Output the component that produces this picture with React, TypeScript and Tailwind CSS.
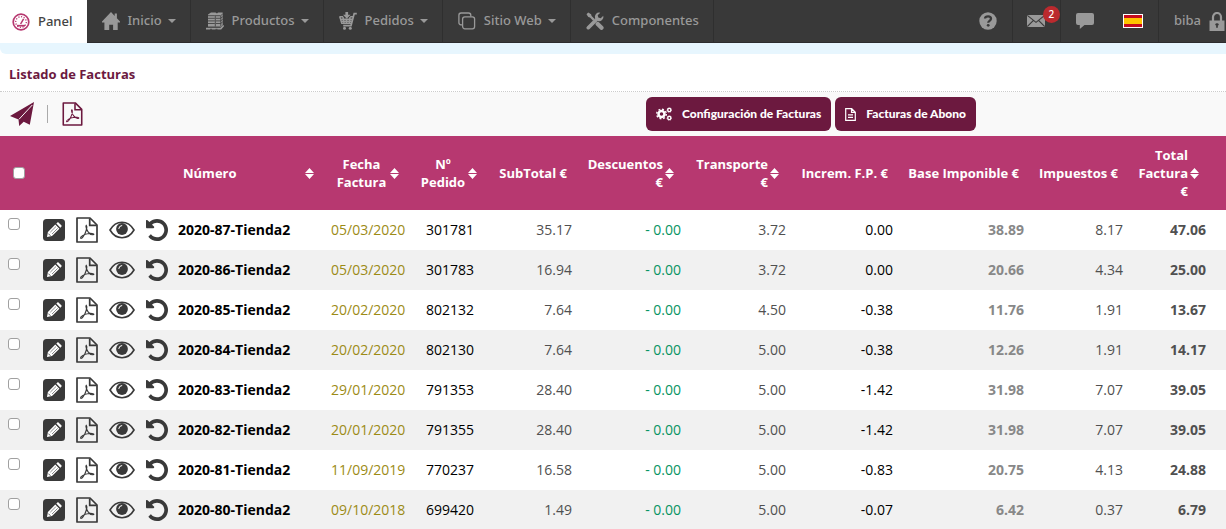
import type { ReactNode } from "react";
import clsx from "clsx";

interface Invoice {
  number: string;
  date: string;
  order: string;
  subtotal: string;
  discount: string;
  shipping: string;
  increment: string;
  base: string;
  taxes: string;
  total: string;
}

const invoices: Invoice[] = [
  { number: "2020-87-Tienda2", date: "05/03/2020", order: "301781", subtotal: "35.17", discount: "- 0.00", shipping: "3.72", increment: "0.00", base: "38.89", taxes: "8.17", total: "47.06" },
  { number: "2020-86-Tienda2", date: "05/03/2020", order: "301783", subtotal: "16.94", discount: "- 0.00", shipping: "3.72", increment: "0.00", base: "20.66", taxes: "4.34", total: "25.00" },
  { number: "2020-85-Tienda2", date: "20/02/2020", order: "802132", subtotal: "7.64", discount: "- 0.00", shipping: "4.50", increment: "-0.38", base: "11.76", taxes: "1.91", total: "13.67" },
  { number: "2020-84-Tienda2", date: "20/02/2020", order: "802130", subtotal: "7.64", discount: "- 0.00", shipping: "5.00", increment: "-0.38", base: "12.26", taxes: "1.91", total: "14.17" },
  { number: "2020-83-Tienda2", date: "29/01/2020", order: "791353", subtotal: "28.40", discount: "- 0.00", shipping: "5.00", increment: "-1.42", base: "31.98", taxes: "7.07", total: "39.05" },
  { number: "2020-82-Tienda2", date: "20/01/2020", order: "791355", subtotal: "28.40", discount: "- 0.00", shipping: "5.00", increment: "-1.42", base: "31.98", taxes: "7.07", total: "39.05" },
  { number: "2020-81-Tienda2", date: "11/09/2019", order: "770237", subtotal: "16.58", discount: "- 0.00", shipping: "5.00", increment: "-0.83", base: "20.75", taxes: "4.13", total: "24.88" },
  { number: "2020-80-Tienda2", date: "09/10/2018", order: "699420", subtotal: "1.49", discount: "- 0.00", shipping: "5.00", increment: "-0.07", base: "6.42", taxes: "0.37", total: "6.79" },
];

/* ICONS */

const GaugeIcon = () => (
  <svg className="h-[18px] w-[18px] shrink-0 text-[#b73870]" viewBox="0 0 18 18" fill="none" stroke="currentColor">
    <circle cx="9" cy="9" r="7.8" strokeWidth="1.7" />
    <circle cx="9" cy="9" r="5.3" strokeWidth="1.3" strokeDasharray="1.2 1.5" />
    <path d="M5 12.7h8" strokeWidth="1.7" />
    <path d="M8.6 11 11.6 5.8" strokeWidth="1.5" />
  </svg>
);

const HomeIcon = () => (
  <svg className="h-[18px] w-[18px] shrink-0" viewBox="0 0 18 18" fill="currentColor">
    <path d="M9 0 12.7 3.9V1.5h2.2v4.7L18 9.6v.9h-2.3V18h-4.6v-5.3H7.2V18H2.4v-7.5H0v-.9z" />
  </svg>
);

const BoxesIcon = () => (
  <svg className="h-[18px] w-[18px] shrink-0" viewBox="0 0 18 18" fill="none">
    <path d="M2 2.600 5 .500h4.500L11 1.500 12 .500h4.700v12.700l-1.900 1.600H2z" fill="currentColor" />
    <path d="M0 15.600h14.600l2.600-2.500 1 .800-3 3.600H0z" fill="currentColor" />
    <path d="M2 3.700h6.800M2 6.300h6.800M2 8.900h6.800M2 11.500h6.800M9.900 3.700h4.700l2-1.500M9.900 6.300h4.700l2-1.500M9.900 8.900h4.700l2-1.500M9.900 11.500h4.700l2-1.500M9.300 3v11.500M14.800 4v10" stroke="#393939" strokeWidth=".800" />
    <path d="M0 15.200h14.600M4 17.300h2M9.500 17.300h2" stroke="#393939" strokeWidth=".800" />
  </svg>
);

const CartIcon = () => (
  <svg className="h-[18px] w-[18px] shrink-0" viewBox="0 0 18 18" fill="none" stroke="currentColor">
    <path d="M17.800 1.600h-2.600L12 13.700H4.200" strokeWidth="1.700" />
    <path d="M.7 4.800h3.500M11.200 4.800h3M.6 4.200l2.200 7h9.700M1.800 7.300h11.600M2.200 9.300h10.600M4 5l1 6M7.500 7v4M11 5l-.7 6" strokeWidth="1.500" />
    <path d="M6.400 0h2.700v2.800h2.500L7.800 6.700 4 2.800h2.400z" fill="currentColor" stroke="none" />
    <circle cx="5.500" cy="16.300" r="1.500" fill="currentColor" stroke="none" />
    <circle cx="11.300" cy="16.300" r="1.500" fill="currentColor" stroke="none" />
  </svg>
);

const CopyIcon = () => (
  <svg className="h-[18px] w-[18px] shrink-0" viewBox="0 0 18 18" fill="none" stroke="currentColor" strokeWidth="1.3">
    <rect x="4.600" y="4.800" width="12" height="12" rx="2.200" />
    <path d="M4.400 12.800H3A2.200 2.200 0 0 1 .9 10.600V3.200A2.200 2.200 0 0 1 3.100 1h7.500a2.200 2.200 0 0 1 2.200 2.200v1.400" />
  </svg>
);

const ToolsIcon = () => (
  <svg className="h-[18px] w-[18px] shrink-0" viewBox="0 0 18 18" fill="none" stroke="currentColor">
    <path d="m2.300 15.700 7.500-7.500" strokeWidth="3.600" strokeLinecap="round" />
    <path d="M14.300.7a4.400 4.400 0 0 0-5.200 5.800l2.500 2.500a4.400 4.400 0 0 0 5.700-5.300l-2.600 2.500-2.400-.6-.6-2.400z" fill="currentColor" stroke="none" />
    <path d="m.500 2.300 1.700-1.700 2.900 1.700.5 1.700 3.100 3.100-1.600 1.600L4 5.600l-1.700-.5z" fill="currentColor" stroke="none" />
    <path d="m11.700 12 3.800 3.800" strokeWidth="4.200" strokeLinecap="round" />
  </svg>
);

const HelpIcon = () => (
  <svg className="h-[18px] w-[18px]" viewBox="0 0 18 18" fill="none">
    <circle cx="9" cy="9" r="8.700" fill="currentColor" />
    <path d="M6 6.500C6.300 3.700 12 3.500 12 6.700c0 2-2.800 2.200-2.800 4" stroke="#393939" strokeWidth="2.300" />
    <circle cx="9.200" cy="13.300" r="1.400" fill="#393939" />
  </svg>
);

const MailIcon = () => (
  <svg className="h-3 w-[18px]" viewBox="0 0 18 12" fill="none">
    <path d="M0 0h18v12H0z" fill="currentColor" />
    <path d="m.3.400 8.700 7 8.700-7M.3 11.600l5.900-6M17.700 11.600l-5.900-6" stroke="#393939" strokeWidth="1.100" />
  </svg>
);

const ChatIcon = () => (
  <svg className="h-[18px] w-[18px]" viewBox="0 0 18 18" fill="currentColor">
    <path d="M2 1h14a2 2 0 0 1 2 2v8a2 2 0 0 1-2 2H8.500L3.800 17v-4H2a2 2 0 0 1-2-2V3a2 2 0 0 1 2-2z" />
  </svg>
);

const LockIcon = () => (
  <svg className="h-[19px] w-4 shrink-0" viewBox="0 0 16 19" fill="none">
    <path d="M4 9V5a4 4 0 0 1 8 0v4" stroke="currentColor" strokeWidth="2.200" />
    <path d="M.5 8.500h15V19H.5z" fill="currentColor" />
    <path d="M8 11.300v4.500M6.300 12.500h3.400" stroke="#393939" strokeWidth="1.700" />
  </svg>
);

const SpainFlag = () => (
  <svg className="h-3.5 w-5" viewBox="0 0 20 14">
    <path d="M0 0h20v14H0z" fill="#fff" />
    <path d="M1 1h18v12H1z" fill="#c60b1e" />
    <path d="M1 4h18v6H1z" fill="#ffc400" />
  </svg>
);

const Caret = () => (
  <svg className="-ml-0.5 h-1 w-2" viewBox="0 0 8 4" fill="currentColor">
    <path d="M0 0h8L4 4z" />
  </svg>
);

const PlaneIcon = () => (
  <svg className="h-6 w-6" viewBox="0 0 24 24">
    <path d="M24 0 19.800 22.800l-6.100-3L9.200 24l-.7-6.600L0 14z" fill="currentColor" />
    <path d="M22.300 3 9 17.300" stroke="#f9f9f9" strokeWidth="1" />
  </svg>
);

const PdfIcon = ({ className }: { className?: string }) => (
  <svg className={className} viewBox="0 0 22 26" fill="none" stroke="currentColor">
    <path d="M1 1h13l7 7v17H1z" strokeWidth="1.700" strokeLinejoin="round" />
    <path d="M13.700 1.500V8.300h7" strokeWidth="1.700" />
    <path d="M10.300 8.300c-1.300.8.7 5 1.800 6.500 1.500 2 3.900 3.400 5.600 2.800.9-1.200-3.300-1.500-6.200-.8-3 .5-7 2.700-7 4.200 1 1.400 3.300-2 4.300-4 1.300-2.700 2.600-7.500 1.500-8.700z" strokeWidth="1.100" />
  </svg>
);

const PencilIcon = () => (
  <svg className="h-[22px] w-[22px]" viewBox="0 0 22 22">
    <rect width="22" height="22" rx="3.500" fill="currentColor" />
    <path d="m4 18 .9-5 7.400-7.400 4.100 4.100L9 17.100zM13.300 4.600l.9-.9c.5-.5 1-.5 1.500 0l2.600 2.600c.5.500.5 1 0 1.500l-.9.9z" fill="#fff" />
    <path d="m7.300 13.200 5.700-5.700M9 15l5.700-5.700" stroke="#393939" strokeWidth=".600" />
    <path d="m5.300 14.600 2.200 2.200" stroke="#393939" strokeWidth=".800" />
  </svg>
);

const EyeIcon = () => (
  <svg className="h-[18px] w-[26px]" viewBox="0 0 26 18" fill="none">
    <path d="M1 9C4 3.800 8.300 1.200 13 1.200S22 3.800 25 9c-3 5.200-7.300 7.700-12 7.700S4 14.200 1 9z" stroke="currentColor" strokeWidth="1.600" />
    <circle cx="13" cy="8" r="5.900" fill="currentColor" />
    <path d="M9.800 7.500a3.300 3.300 0 0 1 3-3" stroke="#fff" strokeWidth="1" strokeLinecap="round" />
  </svg>
);

const UndoIcon = () => (
  <svg className="h-[22px] w-[22px]" viewBox="128 128 1536 1536" fill="currentColor">
    <path d="M1664 896q0 156-61 298t-164 245-245 164-298 61q-172 0-327-72.500t-264-204.500q-7-10-6.500-22.500t8.500-20.500l137-138q10-9 25-9 16 2 23 12 73 95 179 147t225 52q104 0 198.500-40.500t163.500-109.500 109.500-163.500 40.500-198.500-40.500-198.500-109.500-163.500-163.500-109.500-198.500-40.500q-98 0-188 35.500t-160 101.500l137 138q31 30 14 69-17 40-59 40h-448q-26 0-45-19t-19-45v-448q0-42 40-59 39-17 69 14l130 129q107-101 244.500-156.500t284.500-55.500q156 0 298 61t245 164 164 245 61 298z" />
  </svg>
);

const GearsIcon = () => (
  <svg className="h-3.5 w-4" viewBox="0 0 16 14" fill="none" stroke="currentColor">
    <circle cx="5.500" cy="7" r="3" strokeWidth="2.500" />
    <circle cx="5.500" cy="7" r="4.800" strokeWidth="1.400" strokeDasharray="1.900 1.870" />
    <circle cx="13.300" cy="3" r="1.600" strokeWidth="1.400" />
    <circle cx="13.300" cy="3" r="2.400" strokeWidth=".600" strokeDasharray="1 .880" />
    <circle cx="13.300" cy="11" r="1.600" strokeWidth="1.400" />
    <circle cx="13.300" cy="11" r="2.400" strokeWidth=".600" strokeDasharray="1 .880" />
  </svg>
);

const FileIcon = () => (
  <svg className="h-[13px] w-[11px]" viewBox="0 0 11 13" fill="none" stroke="currentColor" strokeWidth="1.200">
    <path d="M.7.700h6l3.600 3.500v8.100H.7zM6.500.700v3.700h3.800M3 6.800h5M3 9.300h5" />
  </svg>
);

const SortIcon = () => (
  <svg className="h-[11px] w-[9px] shrink-0" viewBox="0 0 9 11" fill="#fff">
    <path d="M4.500 0 9 5H0zM0 6h9l-4.500 5z" />
  </svg>
);

/* NAVIGATION */

interface NavItemProps {
  icon: ReactNode;
  label: string;
  active?: boolean;
  menu?: boolean;
}

const NavItem = ({ icon, label, active, menu }: NavItemProps) => (
  <a
    href="#"
    className={clsx(
      "flex items-center gap-2 pr-3.5",
      active
        ? "bg-white pl-3 text-[#444444]"
        : "border-r border-b border-r-[#2f2f2f] border-b-[#2d2c2e] pl-[15px]"
    )}
  >
    {icon}
    <span>{label}</span>
    {menu && <Caret />}
  </a>
);

const TopBar = () => (
  <nav className="flex h-[43px] bg-[#393939] font-['Noto_Sans','Open_Sans',sans-serif] text-[13px] font-medium text-[#999999]">
    <NavItem icon={<GaugeIcon />} label="Panel" active />
    <NavItem icon={<HomeIcon />} label="Inicio" menu />
    <NavItem icon={<BoxesIcon />} label="Productos" menu />
    <NavItem icon={<CartIcon />} label="Pedidos" menu />
    <NavItem icon={<CopyIcon />} label="Sitio Web" menu />
    <NavItem icon={<ToolsIcon />} label="Componentes" />

    <div className="flex flex-1 justify-end border-b border-[#2d2c2e]">
      <button type="button" aria-label="Ayuda" className="flex w-[49px] items-center justify-center border-r border-[#2f2f2f]">
        <HelpIcon />
      </button>
      <button type="button" aria-label="Mensajes" className="relative flex w-12 items-center justify-center border-r border-[#2f2f2f]">
        <MailIcon />
        <span className="absolute top-1.5 right-0 h-[17px] w-[17px] rounded-full bg-[#bb2a2e] text-center text-[10px] leading-4 text-white">
          2
        </span>
      </button>
      <button type="button" aria-label="Chat" className="flex w-12 items-center justify-center">
        <ChatIcon />
      </button>
      <button type="button" aria-label="Español" className="flex w-[50px] items-center justify-center border-r border-[#2f2f2f]">
        <SpainFlag />
      </button>
      <a href="#" className="flex items-center gap-2 pr-px pl-[15px]">
        <span>biba</span>
        <LockIcon />
      </a>
    </div>
  </nav>
);

/* TABLE */

const HeadCell = ({ label, className, sortable }: { label: string; className?: string; sortable?: boolean }) => (
  <th scope="col" className="p-0">
    {sortable ? (
      <button type="button" className={clsx("flex w-full items-center font-bold", className)}>
        <span>{label}</span>
        <SortIcon />
      </button>
    ) : (
      <div className={clsx("whitespace-nowrap", className)}>{label}</div>
    )}
  </th>
);

const Check = ({ label }: { label: string }) => (
  <input
    type="checkbox"
    aria-label={label}
    className="block h-3 w-3 appearance-none rounded-[3px] border border-[#a0a0a0] bg-white checked:bg-[#b73870]"
  />
);

const InvoiceRow = ({ invoice }: { invoice: Invoice }) => (
  <tr className="h-10 odd:bg-white even:bg-[#f1f1f1]">
    <td className="pt-2 pl-2 align-top">
      <Check label={`Seleccionar ${invoice.number}`} />
    </td>
    <td className="pl-[5px]">
      <div className="flex items-center gap-[11px] text-[#393939]">
        <button type="button" aria-label="Editar"><PencilIcon /></button>
        <button type="button" aria-label="PDF"><PdfIcon className="h-[26px] w-[22px]" /></button>
        <button type="button" aria-label="Ver"><EyeIcon /></button>
        <button type="button" aria-label="Deshacer"><UndoIcon /></button>
      </div>
    </td>
    <td className="pl-2.5 font-bold text-black">{invoice.number}</td>
    <td className="pl-2.5 text-[#9c8b16]">{invoice.date}</td>
    <td className="pl-2.5 text-black">{invoice.order}</td>
    <td className="pr-2.5 text-right">{invoice.subtotal}</td>
    <td className="pr-2.5 text-right text-[#079463]">{invoice.discount}</td>
    <td className="pr-2.5 text-right">{invoice.shipping}</td>
    <td className="pr-2.5 text-right text-black">{invoice.increment}</td>
    <td className="pr-2.5 text-right font-bold text-[#888888]">{invoice.base}</td>
    <td className="pr-2.5 text-right">{invoice.taxes}</td>
    <td className="pr-5 text-right font-bold">{invoice.total}</td>
  </tr>
);

const InvoiceTable = () => (
  <table className="w-full table-fixed border-collapse text-sm text-[#505050]">
    <colgroup>
      <col className="w-[38px]" />
      <col className="w-[130px]" />
      <col />
      <col className="w-[95px]" />
      <col className="w-[75px]" />
      <col className="w-[91px]" />
      <col className="w-[109px]" />
      <col className="w-[105px]" />
      <col className="w-[107px]" />
      <col className="w-[131px]" />
      <col className="w-[99px]" />
      <col className="w-[93px]" />
    </colgroup>
    <thead className="bg-[#b73870] text-[13px] leading-[18px] text-white">
      <tr className="h-[74px]">
        <th scope="col" className="pl-[13px]">
          <Check label="Seleccionar todas" />
        </th>
        <th scope="col" aria-label="Acciones" />
        <HeadCell label="Número" sortable className="justify-between pr-[7px] pl-[15px]" />
        <HeadCell label="Fecha Factura" sortable className="gap-[3px] pr-[17px] pl-[15px] text-center" />
        <HeadCell label="Nº Pedido" sortable className="gap-0.5 pr-3.5 pl-1 text-center" />
        <HeadCell label="SubTotal €" className="pr-[15px] text-right" />
        <HeadCell label="Descuentos €" sortable className="justify-end gap-0.5 pr-[17px] text-right" />
        <HeadCell label="Transporte €" sortable className="justify-end gap-0.5 pr-[17px] text-right" />
        <HeadCell label="Increm. F.P. €" className="pr-[15px] text-right" />
        <HeadCell label="Base Imponible €" className="pr-[15px] text-right" />
        <HeadCell label="Impuestos €" className="pr-[15px] text-right" />
        <HeadCell label="Total Factura €" sortable className="justify-end gap-0.5 pr-[27px] pl-1 text-right" />
      </tr>
    </thead>
    <tbody>
      {invoices.map((invoice) => (
        <InvoiceRow key={invoice.number} invoice={invoice} />
      ))}
    </tbody>
  </table>
);

const App = () => {
  return (
    <div className="overflow-hidden bg-white font-['Open_Sans','Noto_Sans',sans-serif]">
      <TopBar />
      <div className="h-[11px] rounded-bl-md bg-[#e7f6fe]" />

      <h1 className="border-b border-dotted border-[#cccccc] pt-[11px] pb-2 pl-[9px] text-[13px] leading-[18px] font-bold text-[#6c193f]">
        Listado de Facturas
      </h1>

      {/* TOOLBAR */}
      <div className="flex h-11 items-center bg-[#f9f9f9] pl-2.5 text-[#6c193f]">
        <button type="button" aria-label="Enviar"><PlaneIcon /></button>
        <span className="mr-3.5 ml-[13px] h-[18px] w-px bg-[#aaaaaa]" />
        <button type="button" aria-label="Exportar PDF"><PdfIcon className="h-6 w-[21px]" /></button>

        <div className="mr-[250px] ml-auto flex gap-1 font-['Lato','Open_Sans',sans-serif] text-xs font-black text-white">
          <button type="button" className="flex h-[34px] items-center gap-2.5 rounded-md bg-[#6c193f] px-2.5">
            <GearsIcon />
            Configuración de Facturas
          </button>
          <button type="button" className="flex h-[34px] items-center gap-2.5 rounded-md bg-[#6c193f] px-2.5">
            <FileIcon />
            Facturas de Abono
          </button>
        </div>
      </div>

      <InvoiceTable />
    </div>
  );
};

export default App;
